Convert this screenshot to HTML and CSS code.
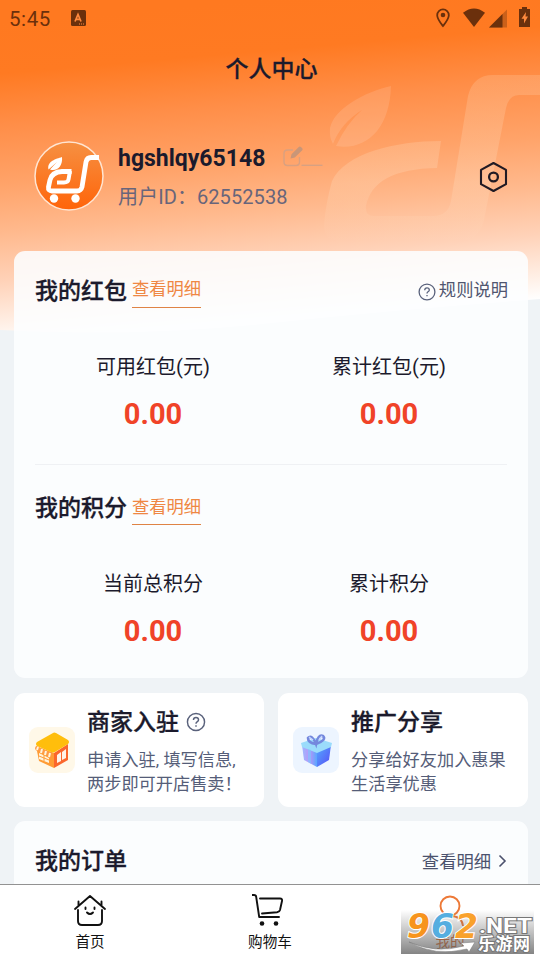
FILE: index.html
```
<!DOCTYPE html>
<html lang="zh-CN">
<head>
<meta charset="utf-8">
<title>个人中心</title>
<link rel="stylesheet" href="styles.css">
</head>
<body>
<div class="screen">
  <svg class="hero-bg" viewBox="0 0 540 335" aria-hidden="true">
    <defs>
      <linearGradient id="hero" gradientUnits="userSpaceOnUse" x1="250" y1="0" x2="278" y2="322">
        <stop offset="0" stop-color="#ff7920"/><stop offset=".16" stop-color="#ff7a22"/><stop offset=".32" stop-color="#ff8e48"/><stop offset=".5" stop-color="#ffa369"/><stop offset=".65" stop-color="#ffb98d"/><stop offset=".8" stop-color="#ffd2b8"/><stop offset=".93" stop-color="#ffefe5"/><stop offset="1" stop-color="#fff"/>
      </linearGradient>
      <linearGradient id="mark" x1="0" y1="0" x2="0" y2="1"><stop offset="0" stop-color="#ffefd8" stop-opacity=".17"/><stop offset=".65" stop-color="#ffefd8" stop-opacity=".2"/><stop offset="1" stop-color="#ffefd8" stop-opacity="0"/></linearGradient>
    </defs>
    <path d="M0 0H540V299Q400 309 270 323T0 330Z" fill="url(#hero)"/>
    <path d="M391 86C364 92 334 109 330 128Q329 137 333 144Q341 123 362 110Q347 123 336 146C367 151 390 128 391 86Z" fill="#fff" fill-opacity=".12"/>
    <path d="M441 141C396 141 345 153 332 181Q326 202 324 225Q324 242 342 242H458Q479 241 484 220L506 108Q509 95 519 95H540V75H493Q473 75 468 96L451 201Q448 216 433 216H374Q365 216 366 206Q373 169 437 168Z" fill="url(#mark)"/>
  </svg>

  <header class="status">
    <span class="clock">5:45</span>
    <svg class="input-mark" width="15" height="16" viewBox="0 0 15 16"><rect width="15" height="16" rx="1.5" fill="#6b300c"/><path d="M4 11.5 7 4.5 10 11.5M5 9.3H9" fill="none" stroke="#ff8a3e" stroke-width="1.7"/><path d="M8 14H14" stroke="#ff8a3e" stroke-width="1" stroke-dasharray="1 1"/></svg>
    <svg class="system" width="96" height="22" viewBox="0 0 96 22"><g fill="#6b300c">
      <path d="M7 1.500A6.700 6.700 0 0 0 .3 8.200C.3 12.700 7 20.400 7 20.400S13.700 12.700 13.700 8.200A6.700 6.700 0 0 0 7 1.500ZM7 3.300A4.900 4.900 0 0 1 11.900 8.200C11.900 10.900 9 14.900 7 17.500C5 14.900 2.100 10.900 2.100 8.200A4.900 4.900 0 0 1 7 3.300Z" fill-rule="evenodd"/><circle cx="7" cy="8" r="2.300"/>
      <path d="M27 5.700Q38-2.800 49 5.700L38 20Z"/><path d="M53 20.500 71 2.500V20.500Z" opacity=".35"/><path d="M53 20.500 66.500 7V20.500Z"/>
      <path d="M83 2H86V0H91V2H94V20H83Z"/></g><path d="M90 5 85.500 11.700H88V16.500L92 9.600H89.500Z" fill="#ff8a3e"/></svg>
  </header>
  <h1>个人中心</h1>

  <section class="profile">
    <svg width="70" height="70" viewBox="0 0 70 70">
      <defs><linearGradient id="av" x1="0" y1="0" x2="0" y2="1"><stop stop-color="#f69042"/><stop offset="1" stop-color="#ff6409"/></linearGradient></defs>
      <circle cx="35" cy="35" r="34" fill="url(#av)" stroke="#ffe5d2" stroke-width="1.5"/>
      <path d="M14.500 28.500C13 20 22 18 28 16C29 25 23 31 16 28.500L23 21Z" fill="#fff"/>
      <path d="M37.500 30.500H28Q18 31 16 39L14.500 46Q14 50 18 50H43Q47 50 48 46L52 21Q53 16.500 57 16.500H65" fill="none" stroke="#fff" stroke-width="4.800"/>
      <path d="M36 30 34.500 38.500Q34 41.500 30 41.500H23" fill="none" stroke="#fff" stroke-width="4"/>
      <circle cx="20" cy="57.500" r="4.200" fill="#fff"/><circle cx="41.500" cy="57.500" r="4.200" fill="#fff"/>
    </svg>
    <div class="who">
      <div class="name-row"><strong>hgshlqy65148</strong>
        <svg width="40" height="22" viewBox="0 0 40 22"><path d="M10 4H4.500Q1 4 1 7.500V16Q1 19.500 4.500 19.500H13Q16.500 19.500 16.500 16V11" fill="none" stroke="#d9a080" stroke-width="1.400"/><path d="M7.500 12.500 8.500 8.300 15.500 1.300Q16.700-.2 18.200 1.200L19 2Q20.300 3.300 19 4.500L11.800 11.500Z" fill="#c99678"/><path d="M18.500 19.300H39.500" stroke="#d5a183" stroke-width="1.300"/></svg>
      </div>
      <div class="uid">用户ID：62552538</div>
    </div>
    <svg class="gear" width="30" height="32" viewBox="0 0 30 32"><path d="M14.500 2 27 8.800V23.200L14.500 30 2 23.200V8.800Z" fill="none" stroke="#211b24" stroke-width="2.100" stroke-linejoin="round"/><circle cx="14.500" cy="16" r="4.400" fill="none" stroke="#211b24" stroke-width="2.300"/></svg>
  </section>

  <main>
    <section class="card wallet">
      <div class="head"><h2>我的红包</h2><a>查看明细</a>
        <span class="rules"><svg width="18" height="18" viewBox="0 0 18 18"><circle cx="9" cy="9" r="7.900"/><path d="M6.700 7.200Q6.800 4.900 9 4.900T11.300 6.900Q11.300 8 10 8.800Q9 9.400 9 10.500M9 12V13.300"/></svg>规则说明</span></div>
      <div class="stats"><div><p>可用红包(元)</p><b>0.00</b></div><div><p>累计红包(元)</p><b>0.00</b></div></div>
      <div class="head second"><h2>我的积分</h2><a>查看明细</a></div>
      <div class="stats"><div><p>当前总积分</p><b>0.00</b></div><div><p>累计积分</p><b>0.00</b></div></div>
    </section>

    <div class="tiles">
      <section class="card tile">
        <svg class="thumb" width="46" height="46" viewBox="0 0 46 46"><rect width="46" height="46" rx="9" fill="#fff8e8"/>
          <path d="M7 19 25 26V41L10 34Z" fill="#ff9c35"/><path d="M25 26 39 17V33L25 41Z" fill="#fb672c"/><path d="M24 6Q25 5 27 6L39 13Q41 15 39 17L26 25Q24 26 22 25L8 19Q6 17 8 15Z" fill="#ffbe0c"/>
          <path d="M7 19 23 26 22 30Q19 32 18 28Q15 29 14 26Q11 27 10 24Q6 24 6 21Z" fill="#ff9b45"/><path d="M9 20 8 23M13 22 12 26M17 24 16 28M21 26 20 30" stroke="#fff5dd" stroke-width="2"/><path d="M10 26 20 31V36L10 32Z" fill="#fff3dc"/><path d="M15 28V34M10 29 20 33" stroke="#ff9c35"/><path d="M28 28 32 25V34L28 36ZM33 25 37 22V31L33 33Z" fill="#fff3e8"/></svg>
        <div class="copy"><h2>商家入驻<svg width="20" height="20" viewBox="0 0 18 18"><circle cx="9" cy="9" r="7.700"/><path d="M6.700 7.200Q6.800 4.900 9 4.900T11.300 6.900Q11.300 8 10 8.800Q9 9.400 9 10.500M9 12V13.300"/></svg></h2><p>申请入驻, 填写信息,<br>两步即可开店售卖！</p></div>
      </section>
      <section class="card tile">
        <svg class="thumb" width="46" height="46" viewBox="0 0 46 46"><defs><linearGradient id="gl"><stop stop-color="#9cb9ff"/><stop offset=".5" stop-color="#b995f8"/><stop offset="1" stop-color="#58a7ff"/></linearGradient><linearGradient id="gr" x1="0" y1="0" x2="1" y2="1"><stop stop-color="#54a8ff"/><stop offset="1" stop-color="#574ef5"/></linearGradient></defs><rect width="46" height="46" rx="9" fill="#edf5ff"/>
          <path d="M9 18 24 24V40L11 33Z" fill="url(#gl)"/><path d="M24 24 38 18 36 33 24 40Z" fill="url(#gr)"/><path d="M8 16 23 11 39 16 38 20 24 26 9 20Z" fill="#9bdcfb"/><path d="M15 22V35L18 37V23Z" fill="#75c9ff" opacity=".6"/>
          <path d="M23 17Q15 16 15 11Q19 7 23 17Q25 7 30 9Q34 13 23 17" fill="none" stroke="#7488dd" stroke-width="2.600"/><path d="M16 10 20 13M29 9 26 13" stroke="#c5d6ff" stroke-width="1.500"/></svg>
        <div class="copy"><h2>推广分享</h2><p>分享给好友加入惠果<br>生活享优惠</p></div>
      </section>
    </div>

    <section class="card orders"><h2>我的订单</h2><span>查看明细<svg width="9" height="14" viewBox="0 0 9 14"><path d="M1.500 1.500 7 7 1.500 12.500" fill="none" stroke="#4b526d" stroke-width="1.600"/></svg></span></section>
  </main>

  <nav>
    <div><svg width="36" height="36" viewBox="0 0 36 36" fill="none" stroke="#111" stroke-width="1.900" stroke-linecap="round" stroke-linejoin="round"><path d="M3 17 18 4 33 17M6.500 13.500V9.500M29.500 13.500V9.500M6 18V29Q6 33 10 33H26Q30 33 30 29V18M13.500 15.500V17M22.500 15.500V17M15 20.500Q18 23.500 21 20.500"/></svg><span>首页</span></div>
    <div><svg width="36" height="36" viewBox="0 0 36 36" fill="none" stroke="#111" stroke-width="1.900" stroke-linecap="round" stroke-linejoin="round"><path d="M0 3H2Q4 3 4.200 5L7.200 25H27M8 6.500H28Q30.500 6.500 30 9L28 18Q27.500 20 25 20.300L10 21.500"/><g fill="#111" stroke="none"><circle cx="10" cy="31.500" r="2.300"/><circle cx="24" cy="31.500" r="2.300"/></g></svg><span>购物车</span></div>
    <div class="active"><svg width="36" height="36" viewBox="0 0 36 36" fill="none" stroke="#ed7937" stroke-width="1.900"><circle cx="18" cy="14" r="9.500"/><path d="M5 34Q6 24 18 24T31 34"/></svg><span>我的</span></div>
  </nav>

  <svg class="watermark" width="133" height="44" viewBox="0 0 133 44">
    <defs><linearGradient id="wm" x1="0" y1="0" x2="0" y2="1"><stop stop-color="#666" stop-opacity="0"/><stop offset="1" stop-color="#666" stop-opacity=".8"/></linearGradient></defs>
    <rect width="133" height="44" fill="url(#wm)"/>
    <g class="digits"><text x="6" y="28" fill="#f7941d">9</text><text x="30" y="28" fill="#55aee0">6</text><text x="54" y="28" fill="#f9a12b">2</text></g>
    <text class="net" x="78" y="23" textLength="53" lengthAdjust="spacingAndGlyphs">.NET</text>
    <path d="M8 32Q34 44 63 36L60 33 74 32 68 42 66 39Q34 47 8 32Z" fill="#fff" stroke="#777" stroke-width=".5"/>
    <text class="site" x="77" y="40" textLength="52">乐游网</text>
  </svg>
</div>
</body>
</html>
```
FILE: styles.css
```
* { box-sizing: border-box; }
body, h1, h2, p { margin: 0; }
body { font-family: Roboto, "Noto Sans CJK SC", sans-serif; color: #1b1a2c; background: #fff; }
svg { display: block; flex: none; }
.screen { position: relative; width: 540px; height: 960px; overflow: hidden; background: #eff3f6; display: flex; flex-direction: column; }
.hero-bg { position: absolute; left: 0; top: 0; width: 540px; height: 335px; }
.status, h1, .profile, main, nav { position: relative; }

.status { height: 38px; display: flex; align-items: center; padding: 0 8px 0 9px; color: #6b300c; }
.clock { font-size: 20.5px; line-height: 38px; letter-spacing: .6px; width: 62px; }
.input-mark { margin-top: -2px; }
.system { margin-left: auto; margin-top: -2px; }
h1 { height: 62px; line-height: 64px; text-align: center; font-size: 23px; font-weight: 500; padding-left: 3px; }
h1, h2 { -webkit-text-stroke: .3px currentColor; }

.profile { height: 151px; display: flex; padding: 41px 31px 0 34px; }
.who { margin-left: 14px; flex: 1; }
.name-row { display: flex; align-items: center; height: 36px; gap: 18px; }
.name-row strong { font-size: 23px; line-height: 36px; font-weight: 700; }
.name-row svg { margin-top: -5px; }
.uid { font-size: 20px; line-height: 30px; margin-top: 5px; color: #68657b; letter-spacing: .08px; }
.gear { margin-top: 20px; }

main { padding: 0 12px 0 14px; flex: 1; display: flex; flex-direction: column; gap: 15px; overflow: hidden; }
.card { background: rgba(253, 254, 255, .88); border-radius: 11px; flex: none; }
h2 { font-size: 23px; font-weight: 500; line-height: 38px; }
.wallet { height: 427px; padding: 21px 21px 0; }
.head { display: flex; align-items: flex-start; height: 70px; }
.head h2 { width: 97px; line-height: 40px; }
.head a { font-size: 17.3px; line-height: 35px; height: 36px; color: #ef8743; border-bottom: 1px solid #df8344; }
.rules { margin-left: auto; display: flex; align-items: center; gap: 3px; height: 36px; margin-right: -1px; font-size: 17.3px; line-height: 36px; color: #50566f; }
.rules svg { margin-top: 3px; }
.rules svg, .copy h2 svg { fill: none; stroke: #59617b; stroke-width: 1.3; }
.stats { height: 122px; display: grid; grid-template-columns: 1fr 1fr; text-align: center; }
.stats p { font-size: 20px; line-height: 50px; }
.stats b { display: block; font-size: 29px; line-height: 44px; color: #f04328; }
.second { border-top: 1px solid #eff1f4; padding-top: 24px; height: 95px; }
.second a { line-height: 37px; }

.tiles { display: grid; grid-template-columns: 250px 250px; gap: 14px; margin-bottom: -1px; }
.tile { height: 114px; display: flex; padding: 11px 0 0 15px; background: #fff; }
.thumb { margin-top: 23px; }
.copy { margin-left: 12px; white-space: nowrap; }
.copy h2 { display: flex; align-items: center; gap: 7px; }
.copy h2 svg { margin-top: -2px; }
.copy p { margin-top: 6px; font-size: 17.2px; line-height: 24px; color: #555d78; }
.orders { height: 110px; padding: 21px 21px 0; display: flex; justify-content: space-between; }
.orders h2 { line-height: 40px; }
.orders span { height: 37px; display: flex; align-items: center; gap: 7px; font-size: 17.3px; color: #4b526d; }

nav { height: 76px; flex: none; display: grid; grid-template-columns: repeat(3, 1fr); background: #fff; border-top: 1px solid #929292; color: #111; }
nav div { display: flex; flex-direction: column; align-items: center; padding-top: 7px; }
nav span { font-size: 14.6px; line-height: 22px; margin-top: 3px; }
nav .active { color: #d85f20; }
.watermark { position: absolute; left: 401px; top: 910px; overflow: visible; }
.digits { font: italic 700 33px "DejaVu Sans", sans-serif; stroke: #fff; stroke-width: 2px; paint-order: stroke; }
.net, .site { fill: #fff; stroke: #777; stroke-width: 2px; paint-order: stroke; }
.net { font: 700 20px Roboto, sans-serif; }
.site { font: 700 17px "Noto Sans CJK SC", sans-serif; }
```
